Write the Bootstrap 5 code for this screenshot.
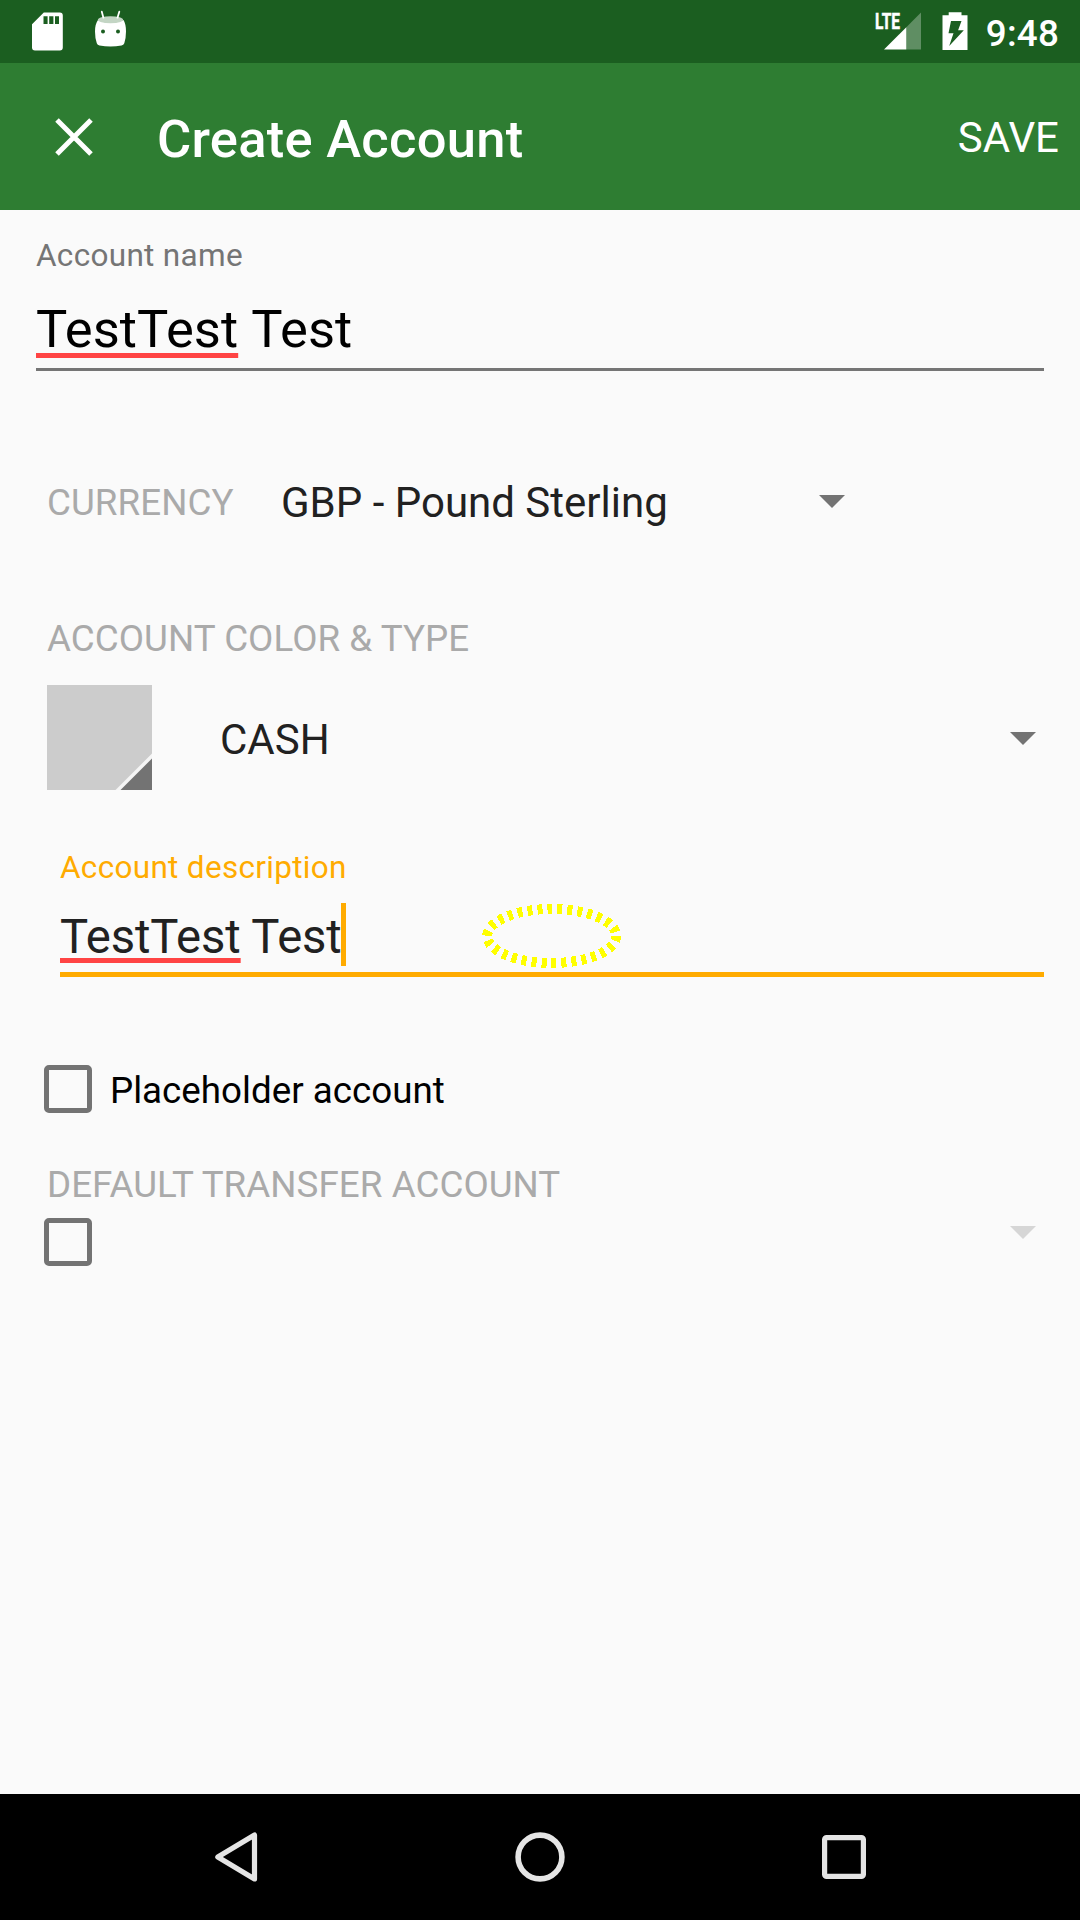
<!DOCTYPE html>
<html lang="en">
<head>
<meta charset="utf-8">
<meta name="viewport" content="width=device-width, initial-scale=1">
<title>Create Account</title>
<link href="https://cdn.jsdelivr.net/npm/bootstrap@5.3.0/dist/css/bootstrap.min.css" rel="stylesheet">
<style>
  body { font-family: Roboto, "Noto Sans", sans-serif; background: #fafafa; color: #212121; width: 1080px; height: 1920px; overflow: hidden; }
  svg { display: block; flex: none; }
  .status-bar { height: 63px; background: #1b5e20; padding: 0 21px 0 32px; }
  .clock { font-size: 36.75px; font-weight: 500; line-height: 63px; padding-top: 3px; margin-left: 17px; letter-spacing: .2px; }
  .app-bar { height: 147px; background: #2e7d32; padding: 0 21px 0 54.5px; }
  .app-title { font-size: 52.5px; font-weight: 500; line-height: 60px; margin-left: 64.5px; padding-top: 4px; letter-spacing: .26px; }
  .save-btn { font-size: 42px; line-height: 50px; padding: 2px 0 0; border: 0; border-radius: 0; }
  .form-area { padding: 25px 36px 0; }
  .float-label { font-size: 31.5px; line-height: 40px; height: 40px; padding-top: 1px; color: #757575; letter-spacing: .31px; }
  .name-input { font-size: 52.5px; line-height: 76px; padding-top: 16px; height: 95.5px; color: #000; border-bottom: 3px solid #757575; word-spacing: 1px; letter-spacing: .05px; }
  .misspelt { text-decoration: underline #ff4444 5px; text-underline-offset: 5.5px; text-decoration-skip-ink: none; }
  .section-label { font-size: 36.75px; line-height: 44px; color: #aaa; padding-left: 11px; letter-spacing: .05px; }
  .picker { font-size: 42px; line-height: 60px; }
  .picker svg { margin-right: .5px; }
  .currency-row { margin-top: 102px; height: 60px; }
  .currency-row .section-label { width: 245px; line-height: 60px; }
  .currency-row .picker { width: 564px; }
  .currency-row svg { margin-bottom: 2px; }
  .type-label { margin-top: 84.5px; }
  .type-row { margin-top: 24px; padding: 0 8px 0 11px; }
  .type-row .picker { padding-left: 68px; }
  .type-row .picker svg { margin-top: 2px; }
  .description { margin: 57px 0 0 24px; }
  .description .float-label { color: #ffab00; }
  .desc-input { font-size: 47.25px; line-height: 70px; padding-top: 15px; height: 90px; border-bottom: 5px solid #ffab00; letter-spacing: -.12px; }
  .desc-input .misspelt { text-underline-offset: 5px; }
  .caret-bar { width: 5px; height: 63px; background: #ffab00; margin: 1px 0 0 -1px; }
  .touch-ring { position: absolute; left: 481px; top: 903px; }
  .form-check-input.box { width: 48px; height: 48px; margin: 0; border: 5px solid #737373; border-radius: 5px; background: transparent; flex: none; }
  .check-row { padding: 0 8px; height: 48px; }
  .placeholder-row { margin-top: 88px; gap: 18px; font-size: 36.75px; line-height: 50px; color: #000; }
  .placeholder-row span { padding-top: 3px; }
  .transfer-label { margin-top: 50px; }
  .transfer-row { margin-top: 11px; }
  .transfer-row svg { margin: 8px .5px 0 0; }
  .nav-keys { height: 126px; padding: 0 214px; }
</style>
</head>
<body class="d-flex flex-column">

<header>
  <div class="status-bar d-flex align-items-center text-white">
    <svg width="100" height="63" viewBox="32 0 100 63" fill="#fff">
      <path fill-rule="evenodd" d="M43.8 12.4H59.8Q62.8 12.4 62.8 15.4V47.6Q62.8 50.6 59.8 50.6H35Q32 50.6 32 47.6V24.2ZM43.5 16.3V24H47.6V16.3ZM49.2 16.3V24H53.4V16.3ZM55 16.3V24H59V16.3Z"/>
      <path d="M98 20Q110.300 26 123.500 20Q126 24 126 31.500Q126 38 124.300 43.200Q123.600 45 121.500 45.500Q110.500 47.700 99.500 45.500Q97.400 45 96.800 43.200Q95 38 95 31.500Q95 24 98 20Z"/>
      <ellipse cx="110.500" cy="19.700" rx="12.600" ry="3.500" fill="#c3d5c4"/>
      <path d="M101.800 11.700L103.400 17.700M119.300 11.700L117.500 17.700" stroke="#fff" stroke-width="1.800" stroke-linecap="round"/>
      <circle cx="103" cy="31.500" r="2" fill="#1b5e20"/><circle cx="118" cy="31.500" r="2" fill="#1b5e20"/>
    </svg>
    <svg class="ms-auto" width="96" height="63" viewBox="873.500 0 96 63" fill="#fff">
      <text x="875.500" y="29" font-size="21.500" font-weight="700" stroke="#fff" stroke-width=".5" textLength="25" lengthAdjust="spacingAndGlyphs">LTE</text>
      <path d="M884.500 49.600L906.800 27.300V49.600Z"/>
      <path d="M906.800 27.300L921.500 12.600V49.600H906.800Z" opacity=".3"/>
      <path fill-rule="evenodd" d="M949.200 12.300H962V15.200H968V50H943V15.200H949.200ZM951.500 21L949 33.300H954L949.700 46L964.300 30.300H958.600L962 21Z"/>
    </svg>
    <span class="clock">9:48</span>
  </div>
  <nav class="app-bar d-flex align-items-center text-white">
    <svg width="38" height="38" viewBox="0 0 38 38"><path d="M2 2L36 36M36 2L2 36" stroke="#fff" stroke-width="5"/></svg>
    <span class="app-title">Create Account</span>
    <button type="button" class="btn save-btn ms-auto text-white">SAVE</button>
  </nav>
</header>

<main class="form-area flex-grow-1">
  <section>
    <div class="float-label">Account name</div>
    <div class="name-input"><span class="misspelt">TestTest</span> Test</div>
  </section>

  <div class="currency-row d-flex align-items-center">
    <div class="section-label">CURRENCY</div>
    <div class="picker d-flex align-items-center justify-content-between">
      <span>GBP - Pound Sterling</span>
      <svg width="26" height="13" viewBox="0 0 26 13"><path d="M0 0H26L13 13Z" fill="#737373"/></svg>
    </div>
  </div>

  <div class="section-label type-label">ACCOUNT COLOR &amp; TYPE</div>
  <div class="type-row d-flex align-items-center">
    <svg width="105" height="105" viewBox="0 0 105 105"><path d="M0 0H105V105H0Z" fill="#ccc"/><path d="M105 68.500V105H68.500Z" fill="#f5f5f5"/><path d="M105 73.500V105H73.500Z" fill="#737373"/></svg>
    <div class="picker d-flex align-items-center justify-content-between flex-grow-1">
      <span class="pt-1">CASH</span>
      <svg width="26" height="13" viewBox="0 0 26 13"><path d="M0 0H26L13 13Z" fill="#737373"/></svg>
    </div>
  </div>

  <section class="description">
    <div class="float-label">Account description</div>
    <div class="desc-input d-flex"><span><span class="misspelt">TestTest</span> Test</span><span class="caret-bar"></span></div>
  </section>

  <label class="check-row placeholder-row d-flex align-items-center">
    <input type="checkbox" class="form-check-input box">
    <span>Placeholder account</span>
  </label>

  <div class="section-label transfer-label">DEFAULT TRANSFER ACCOUNT</div>
  <div class="check-row transfer-row d-flex justify-content-between">
    <input type="checkbox" class="form-check-input box">
    <svg width="26" height="13" viewBox="0 0 26 13"><path d="M0 0H26L13 13Z" fill="#d6d6d6"/></svg>
  </div>
</main>

<svg class="touch-ring" width="142" height="66" viewBox="481 903 142 66"><ellipse cx="551.700" cy="936" rx="64.500" ry="27" fill="none" stroke="#ff0" stroke-width="10" stroke-dasharray="5 5" shape-rendering="crispEdges"/></svg>

<footer class="nav-keys bg-black d-flex align-items-center justify-content-between">
  <svg width="44" height="52" viewBox="0 0 44 52"><path d="M40.500 4V48L3.800 26Z" fill="none" stroke="#e5e5e5" stroke-width="5.200" stroke-linejoin="round"/></svg>
  <svg width="52" height="52" viewBox="0 0 52 52"><circle cx="26" cy="26" r="21.900" fill="none" stroke="#e5e5e5" stroke-width="5.600"/></svg>
  <svg width="44" height="44" viewBox="0 0 44 44"><rect x="2.600" y="2.600" width="38.800" height="38.800" rx="2" fill="none" stroke="#e5e5e5" stroke-width="5.200"/></svg>
</footer>

<script src="https://cdn.jsdelivr.net/npm/bootstrap@5.3.0/dist/js/bootstrap.bundle.min.js"></script>
</body>
</html>
